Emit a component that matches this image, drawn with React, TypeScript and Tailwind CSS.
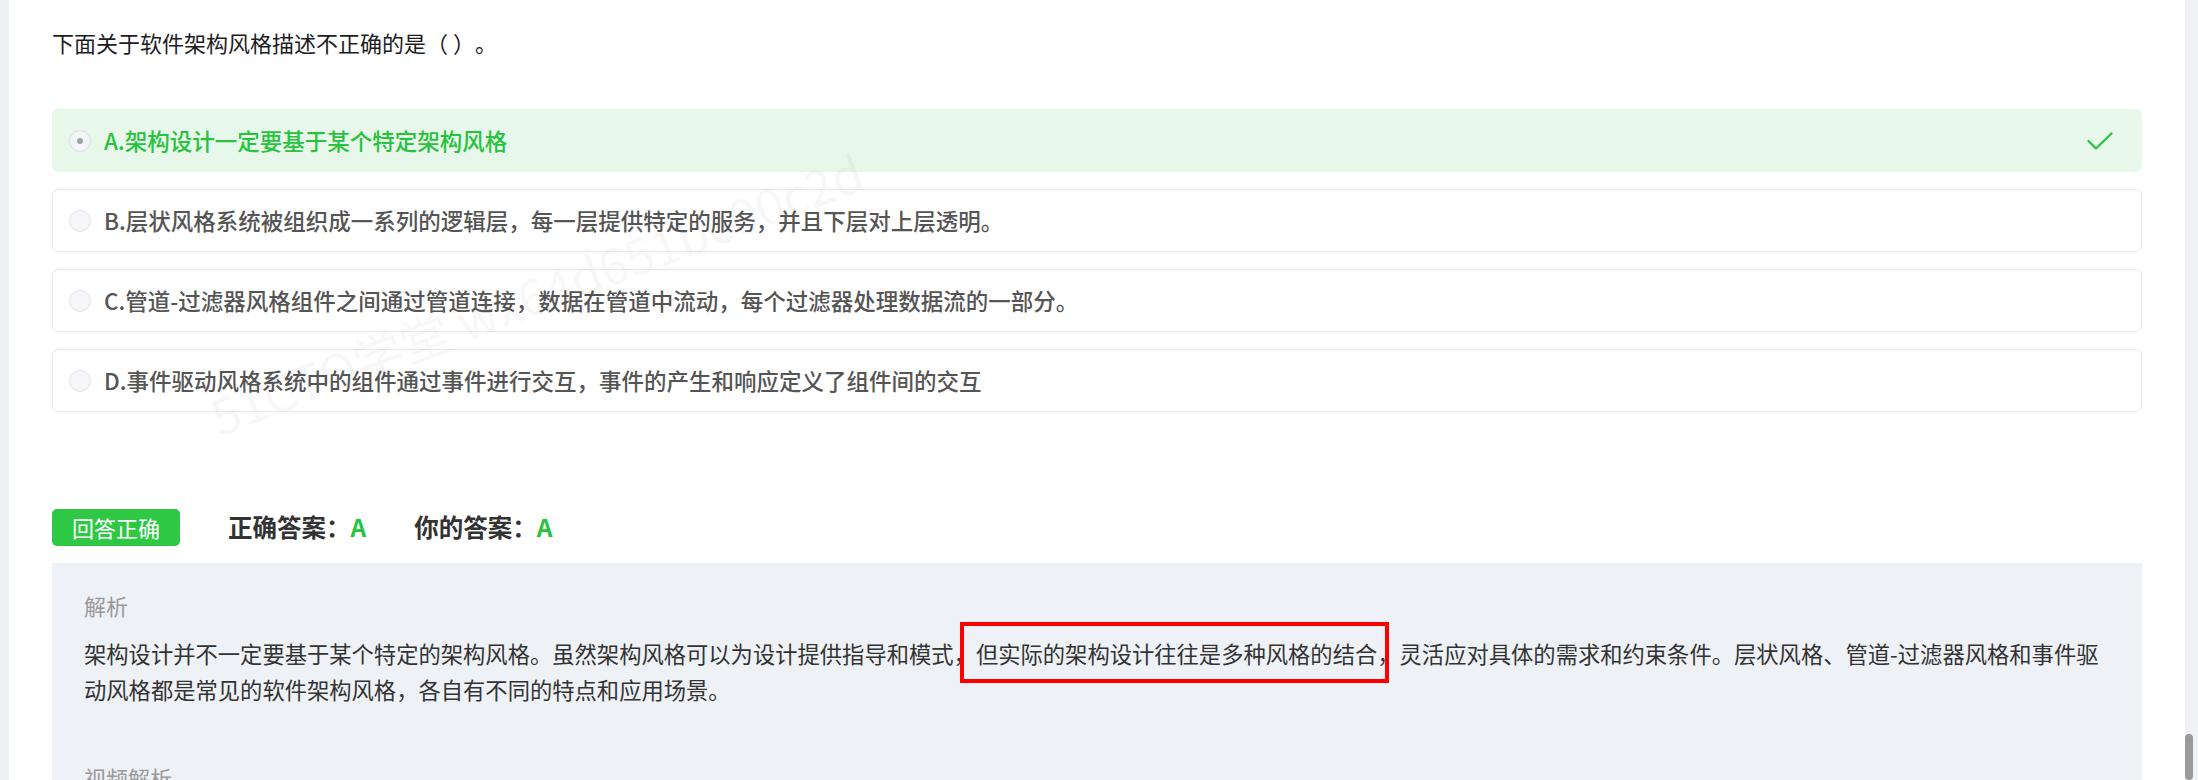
const options = [
  { key: 'A', text: '架构设计一定要基于某个特定架构风格', correct: true },
  { key: 'B', text: '层状风格系统被组织成一系列的逻辑层，每一层提供特定的服务，并且下层对上层透明。' },
  { key: 'C', text: '管道-过滤器风格组件之间通过管道连接，数据在管道中流动，每个过滤器处理数据流的一部分。' },
  { key: 'D', text: '事件驱动风格系统中的组件通过事件进行交互，事件的产生和响应定义了组件间的交互' },
];

function CheckMark() {
  return (
    <svg width="26" height="18" viewBox="0 0 26 18" fill="none" className="mr-3 ml-auto">
      <polyline points="1.5,9 9,16.5 24.5,1.5" stroke="#27c23e" strokeWidth="2.2" strokeLinecap="round" strokeLinejoin="round" />
    </svg>
  );
}

function OptionRow({ label, text, correct }: { label: string; text: string; correct?: boolean }) {
  return (
    <div
      className={
        correct
          ? 'flex h-[63px] items-center rounded-md border border-[#e7f8ea] bg-[#e7f8ea] px-4'
          : 'flex h-[63px] items-center rounded-md border border-[#e8e9ef] bg-white px-4'
      }
    >
      <span
        className={
          correct
            ? 'flex h-[22px] w-[22px] shrink-0 items-center justify-center rounded-full border border-[#dcdde3] bg-[#f3f4f7]'
            : 'flex h-[22px] w-[22px] shrink-0 items-center justify-center rounded-full border border-[#e2e3e9] bg-[#f5f6f9]'
        }
      >
        {correct && <span className="h-[6px] w-[6px] rounded-full bg-[#a3a4aa]" />}
      </span>
      <span
        className={
          correct
            ? 'ml-[13px] text-[22.5px] font-medium text-[#27c23e]'
            : 'ml-[13px] text-[22.5px] font-medium text-[#555555]'
        }
      >
        {label}.{text}
      </span>
      {correct && <CheckMark />}
    </div>
  );
}

export default function App() {
  return (
    <div className="flex h-[780px] w-full overflow-hidden bg-[#eef0f5] font-['Noto_Sans_CJK_SC','Noto_Sans',sans-serif] [text-spacing-trim:space-all]">
      <div className="w-[9px] shrink-0" />

      <main className="relative flex-1 overflow-hidden bg-white px-[43px] pt-6">
        {/* watermark */}
        <div className="pointer-events-none absolute top-[255px] left-[180px] -rotate-[21deg] text-[50px] whitespace-nowrap text-black/[0.03]">
          51CTO学堂 wx64d651bc00c2d
        </div>

        <p className="text-[22px] leading-9 text-[#1d1d1f]">下面关于软件架构风格描述不正确的是（ ）。</p>

        <div className="mt-[49px] flex flex-col gap-[17px]">
          {options.map((o) => (
            <OptionRow key={o.key} label={o.key} text={o.text} correct={o.correct} />
          ))}
        </div>

        {/* Result */}
        <div className="mt-[97px] flex items-center">
          <span className="flex h-[37px] w-[128px] items-center justify-center rounded-[5px] bg-[#2ec845] text-[22px] text-white">
            回答正确
          </span>
          <span className="ml-[48px] text-[24.5px] font-semibold text-[#333333]">
            正确答案：<span className="text-[#27c23e]">A</span>
          </span>
          <span className="ml-[48px] text-[24.5px] font-semibold text-[#333333]">
            你的答案：<span className="text-[#27c23e]">A</span>
          </span>
        </div>

        {/* Analysis */}
        <div className="mt-[17px] h-[400px] bg-[#eef1f6] px-8 pt-6">
          <p className="text-[22px] leading-9 text-[#999999]">解析</p>
          <p className="mt-3 text-[22.3px] leading-9 text-[#333333]">
            架构设计并不一定要基于某个特定的架构风格。虽然架构风格可以为设计提供指导和模式，
            <span className="relative inline-block">
              但实际的架构设计往往是多种风格的结合
              <span className="absolute -top-[13px] -right-[12px] -bottom-[12px] -left-[16px] border-4 border-[#ff0000]" />
            </span>
            ，灵活应对具体的需求和约束条件。层状风格、管道-过滤器风格和事件驱动风格都是常见的软件架构风格，各自有不同的特点和应用场景。
          </p>
          <p className="mt-[52px] text-[22px] leading-9 text-[#999999]">视频解析</p>
        </div>
      </main>

      {/* scrollbar */}
      <div className="relative w-[13px] shrink-0 bg-[#f1f2f6]">
        <div className="absolute bottom-0 left-0 h-[46px] w-[8px] rounded-full bg-[#9a9a9a]" />
      </div>
    </div>
  );
}
